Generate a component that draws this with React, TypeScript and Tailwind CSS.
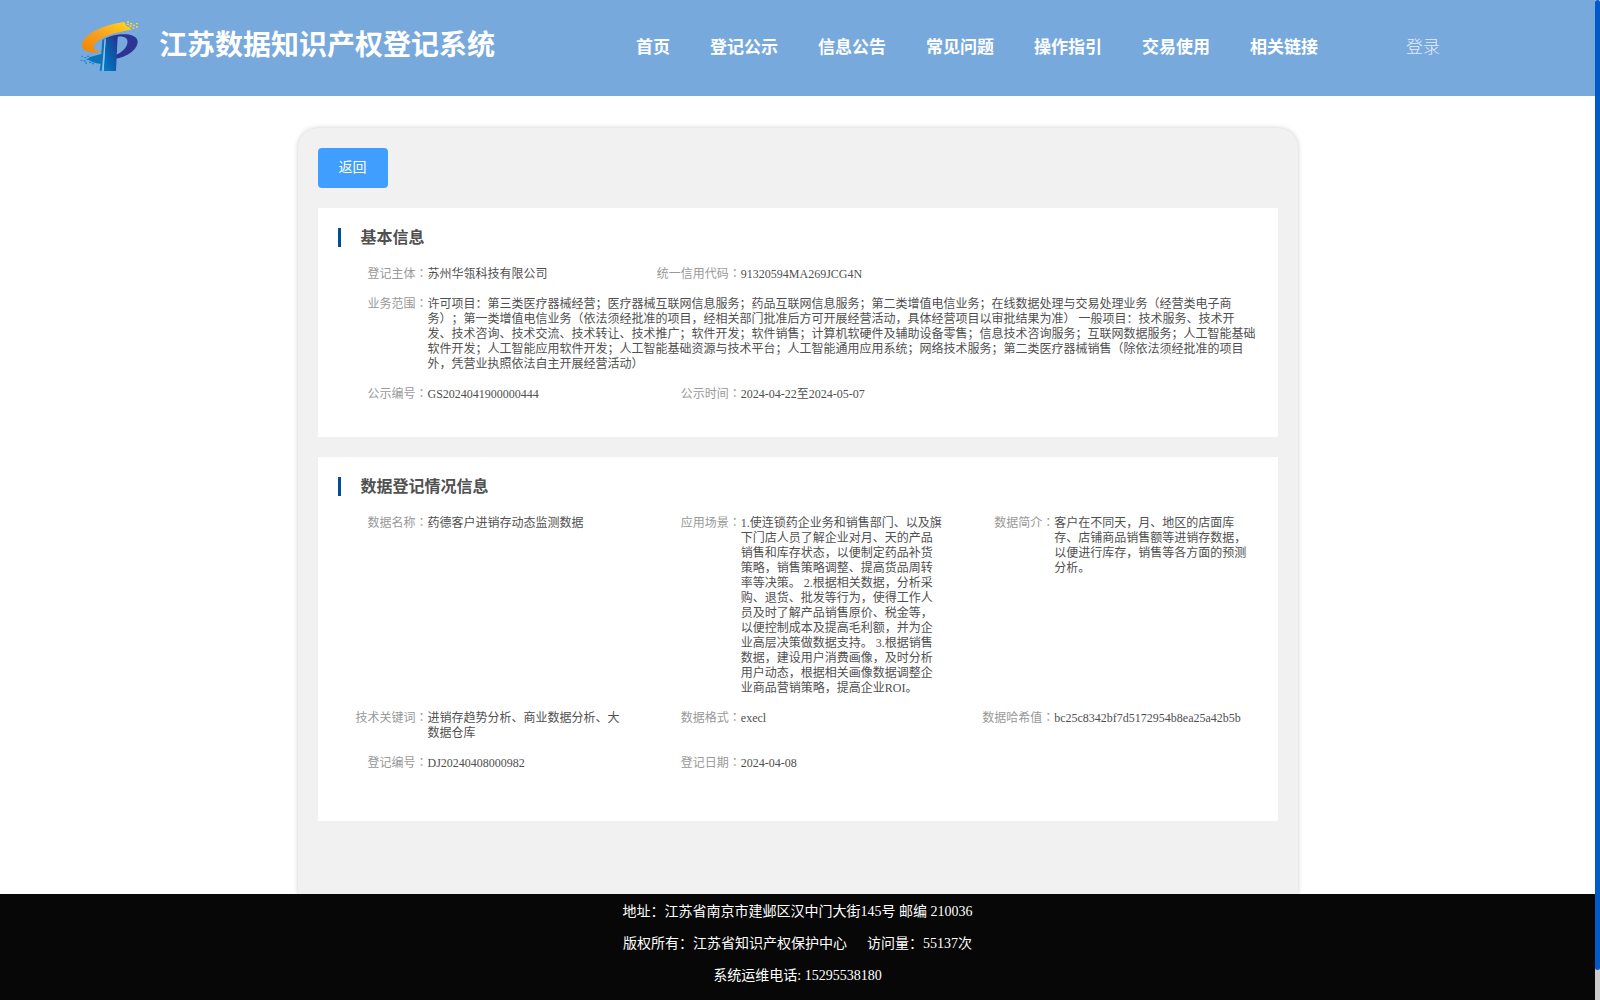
import type { ReactNode } from "react";

const navItems = ["首页", "登记公示", "信息公告", "常见问题", "操作指引", "交易使用", "相关链接"];

interface Field {
  label: string;
  value: string;
  wide?: boolean;
}

const basicInfo: Field[] = [
  { label: "登记主体", value: "苏州华瓴科技有限公司" },
  { label: "统一信用代码", value: "91320594MA269JCG4N" },
  {
    label: "业务范围",
    value:
      "许可项目：第三类医疗器械经营；医疗器械互联网信息服务；药品互联网信息服务；第二类增值电信业务；在线数据处理与交易处理业务（经营类电子商务）；第一类增值电信业务（依法须经批准的项目，经相关部门批准后方可开展经营活动，具体经营项目以审批结果为准） 一般项目：技术服务、技术开发、技术咨询、技术交流、技术转让、技术推广；软件开发；软件销售；计算机软硬件及辅助设备零售；信息技术咨询服务；互联网数据服务；人工智能基础软件开发；人工智能应用软件开发；人工智能基础资源与技术平台；人工智能通用应用系统；网络技术服务；第二类医疗器械销售（除依法须经批准的项目外，凭营业执照依法自主开展经营活动）",
    wide: true,
  },
  { label: "公示编号", value: "GS2024041900000444" },
  { label: "公示时间", value: "2024-04-22至2024-05-07" },
];

const dataInfo: Field[] = [
  { label: "数据名称", value: "药德客户进销存动态监测数据" },
  {
    label: "应用场景",
    value:
      "1.使连锁药企业务和销售部门、以及旗下门店人员了解企业对月、天的产品销售和库存状态，以便制定药品补货策略，销售策略调整、提高货品周转率等决策。 2.根据相关数据，分析采购、退货、批发等行为，使得工作人员及时了解产品销售原价、税金等，以便控制成本及提高毛利额，并为企业高层决策做数据支持。 3.根据销售数据，建设用户消费画像，及时分析用户动态，根据相关画像数据调整企业商品营销策略，提高企业ROI。",
  },
  {
    label: "数据简介",
    value:
      "客户在不同天，月、地区的店面库存、店铺商品销售额等进销存数据，以便进行库存，销售等各方面的预测分析。",
  },
  { label: "技术关键词", value: "进销存趋势分析、商业数据分析、大数据仓库" },
  { label: "数据格式", value: "execl" },
  { label: "数据哈希值", value: "bc25c8342bf7d5172954b8ea25a42b5b" },
  { label: "登记编号", value: "DJ20240408000982" },
  { label: "登记日期", value: "2024-04-08" },
];

function Logo() {
  return (
    <svg viewBox="30 30 180 150" className="h-[50px] w-[60px]" aria-hidden="true">
      <defs>
        <linearGradient id="swoosh" x1="0" y1="1" x2="1" y2="0">
          <stop offset="0" stopColor="#f08300" />
          <stop offset="0.5" stopColor="#f8a322" />
          <stop offset="1" stopColor="#ffd91c" />
        </linearGradient>
        <linearGradient id="stem" x1="0" y1="1" x2="1" y2="0">
          <stop offset="0" stopColor="#0080c8" />
          <stop offset="0.5" stopColor="#0b5cab" />
          <stop offset="1" stopColor="#2a3190" />
        </linearGradient>
      </defs>
      <path
        d="M163 33 C118 38 44 62 36 100 C33 119 58 128 94 124 L96 121 C72 121 65 110 75 98 C92 78 132 64 184 56 L178 49 L170 46 L166 40 Z"
        fill="url(#swoosh)"
      />
      <path
        d="M105 84 C130 67 197 62 203 90 C204 118 166 139 138 143 L138 132 C158 124 176 105 172 88 C169 77 152 75 142 78 L142 84 Z"
        fill="#2d3494"
      />
      <path d="M107 83 L143 75 L138 180 L101 180 Z" fill="url(#stem)" />
      <path d="M97 86 L104 84 L95 179 L89 179 L92 158 C78 158 70 154 62 150 L52 145 L60 138 L94 129 Z" fill="#0875bd" />
      <path d="M104 86 L107 84 L101 179 L98 179 Z" fill="#a3c6ea" />
      <path
        d="M171 31h6v4h-6zM180 36h7v4h-7zM189 41h6v4h-6zM170 38h7v4h-7zM178 43h7v4h-7zM198 36h6v4h-6zM198 45h5v5h-5zM187 49h6v4h-6z"
        fill="#ffd91c"
      />
      <path
        d="M34 134h5v4h-5zM43 138h6v4h-6zM51 134h6v4h-6zM32 146h5v4h-5zM41 148h6v4h-6zM50 143h6v5h-6zM57 152h7v4h-7zM46 154h5v4h-5zM66 155h6v5h-6z"
        fill="#1490d2"
      />
    </svg>
  );
}

function FieldItem({ label, value, wide }: Field) {
  return (
    <div className={`flex pr-5 ${wide ? "col-span-3" : ""}`}>
      <dt className="w-[90px] shrink-0 text-right text-[#999999]">
        {label}
        <span className="font-['Noto_Sans_CJK_TC',sans-serif] leading-none">：</span>
      </dt>
      <dd className="min-w-0 flex-1 text-[#505050]">{value}</dd>
    </div>
  );
}

function Panel({ title, className, children }: { title: string; className: string; children: ReactNode }) {
  return (
    <section className={`mt-5 bg-white pt-5 pl-5 ${className}`}>
      <h2 className="border-l-3 border-[#004f94] pl-5 text-base leading-[19px] font-bold text-[#505050]">{title}</h2>
      <dl className="mt-5 grid grid-cols-3 gap-y-[15px] text-xs leading-[15px]">{children}</dl>
    </section>
  );
}

export default function App() {
  return (
    <div className="flex min-h-screen bg-white font-['Liberation_Serif','Noto_Sans_CJK_SC',serif] [text-spacing-trim:space-all]">
      <div className="flex min-w-0 flex-1 flex-col">
        <header className="flex h-24 items-center bg-[#78a9dd] pl-20 text-white">
          <div className="flex items-center gap-[19px] pb-1">
            <Logo />
            <h1 className="text-[28px] leading-9 font-bold whitespace-nowrap">江苏数据知识产权登记系统</h1>
          </div>
          <nav className="ml-[141px] flex gap-10 text-[17px] leading-6 font-bold whitespace-nowrap">
            {navItems.map((item) => (
              <a key={item} href="#">
                {item}
              </a>
            ))}
          </nav>
          <a href="#" className="ml-[88px] text-[17px] leading-6 font-light whitespace-nowrap text-[#e4eef9]">
            登录
          </a>
        </header>

        <main className="flex flex-1 flex-col pt-8">
          <div className="mx-auto w-full max-w-[1000px] flex-1 rounded-t-[20px] bg-[#f1f1f1] px-5 pt-5 pb-10 shadow-[0_0_5px_rgba(0,0,0,0.2)]">
            <button type="button" className="block h-10 w-[70px] rounded bg-[#409eff] text-sm text-white">
              返回
            </button>
            <Panel title="基本信息" className="pb-[35px]">
              {basicInfo.map((f) => (
                <FieldItem key={f.label} {...f} />
              ))}
            </Panel>
            <Panel title="数据登记情况信息" className="pb-[50px]">
              {dataInfo.map((f) => (
                <FieldItem key={f.label} {...f} />
              ))}
            </Panel>
          </div>
        </main>

        <footer className="relative bg-[#070707] pt-0.5 pb-2 text-center text-sm leading-8 text-white">
          <p>地址：江苏省南京市建邺区汉中门大街145号 邮编 210036</p>
          <p>
            版权所有：江苏省知识产权保护中心<span className="ml-5">访问量：55137次</span>
          </p>
          <p>系统运维电话: 15295538180</p>
        </footer>
      </div>

      <div className="flex w-[5px] shrink-0 flex-col bg-[#cccccc]" aria-hidden="true">
        <div className="h-[97%] rounded-sm bg-[#005ac8]" />
      </div>
    </div>
  );
}
